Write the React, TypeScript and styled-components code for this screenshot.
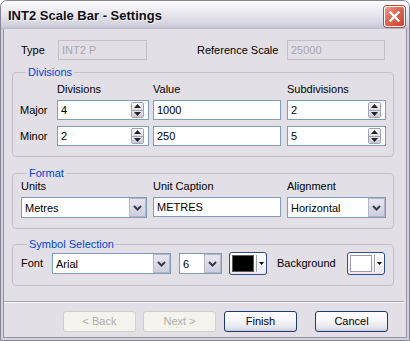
import React from 'react';
import styled, { createGlobalStyle } from 'styled-components';

const GlobalStyle = createGlobalStyle`
  html, body { margin: 0; padding: 0; background: #ffffff; }
  body { font-family: "Liberation Sans", Arial, sans-serif; font-size: 11px; color: #000; }
  * { box-sizing: border-box; }
`;

const Window = styled.div`
  width: 410px;
  height: 341px;
  display: flex;
  flex-direction: column;
  border: 1px solid #858494;
  border-radius: 7px 7px 0 0;
  overflow: hidden;
  background: #e3dfe6;
`;

const TitleBar = styled.div`
  height: 28px;
  flex: none;
  display: flex;
  align-items: center;
  justify-content: space-between;
  padding: 0 4px 0 7px;
  background: linear-gradient(#fdfdfe 0%, #f1f0f5 25%, #e2e1ea 60%, #cfcedb 90%, #b9b8c7 100%);
`;

const Title = styled.span`
  font-family: "Liberation Sans", Arial, sans-serif;
  font-weight: bold;
  font-size: 13px;
  color: #0f0f14;
  text-shadow: 1px 1px 0 rgba(255, 255, 255, 0.7);
  padding-top: 1px;
`;

const CloseBtn = styled.div`
  width: 21px;
  height: 21px;
  border-radius: 3px;
  border: 1px solid #ffffff;
  box-shadow: 0 0 0 1px #b54a3c;
  background: linear-gradient(135deg, #f0a092 0%, #de6a55 40%, #c9442f 100%);
  display: flex;
  align-items: center;
  justify-content: center;
  margin-top: 2px;
`;

const Frame = styled.div`
  flex: 1;
  display: flex;
  flex-direction: column;
  border-style: solid;
  border-width: 0 2px 2px 2px;
  border-color: #d2d1dc;
`;

const Body = styled.div`
  flex: 1;
  display: flex;
  flex-direction: column;
  border-style: solid;
  border-width: 0 1px 1px 1px;
  border-color: #94939f;
  padding: 11px 12px 0 8px;
  overflow: hidden;
`;

const TopRow = styled.div`
  display: grid;
  grid-template-columns: 37px 139px 90px 98px;
  align-items: center;
  margin-left: 9px;
  height: 20px;
`;

const Label = styled.span`
  white-space: nowrap;
  line-height: 13px;
`;

const FieldLabel = styled.span`
  white-space: nowrap;
  line-height: 13px;
  height: 20px;
  display: flex;
  align-items: center;
`;

const TextBox = styled.div<{ $w: number; $disabled?: boolean }>`
  width: ${p => p.$w}px;
  height: 20px;
  border: 1px solid ${p => (p.$disabled ? '#c2bfc6' : '#7f9db9')};
  background: ${p => (p.$disabled ? '#e3dfe6' : '#ffffff')};
  color: ${p => (p.$disabled ? '#a9a6ae' : '#000000')};
  display: flex;
  align-items: center;
  padding-left: 3px;
  white-space: nowrap;
`;

const BoxText = styled.span`
  flex: 1;
`;

const Spin = styled.div`
  width: 13px;
  height: 16px;
  margin-right: 4px;
  display: flex;
  flex-direction: column;
  border: 1px solid #a2a1b1;
  border-radius: 2px;
  overflow: hidden;
`;

const SpinHalf = styled.div<{ $down?: boolean }>`
  flex: 1;
  display: flex;
  align-items: center;
  justify-content: center;
  background: ${p => (p.$down ? 'linear-gradient(#e6e5ee, #c9c8d6)' : 'linear-gradient(#ffffff, #dddce6)')};
  border-top: ${p => (p.$down ? '1px solid #a2a1b1' : 'none')};
`;

const Select = styled.div<{ $w: number }>`
  width: ${p => p.$w}px;
  height: 21px;
  border: 1px solid #7f9db9;
  background: #ffffff;
  display: flex;
  align-items: stretch;
  padding-left: 3px;
`;

const SelectText = styled.span`
  flex: 1;
  display: flex;
  align-items: center;
  white-space: nowrap;
`;

const DropBtn = styled.div`
  width: 17px;
  flex: none;
  margin: 0;
  border: 1px solid #b7b6c8;
  background: linear-gradient(#e6e5ef, #cfcee0);
  display: flex;
  align-items: center;
  justify-content: center;
`;

const Group = styled.fieldset<{ $pad: string; $mt: number }>`
  margin: ${p => p.$mt}px 0 0 0;
  width: 382px;
  min-width: 0;
  padding: ${p => p.$pad};
  border: 1px solid #c3c0c8;
  border-radius: 4px;
`;

const Legend = styled.legend`
  color: #0046d5;
  padding: 0 2px;
  margin-left: 6px;
  line-height: 13px;
`;

const DivGrid = styled.div`
  display: grid;
  grid-template-columns: 37px 96px 134px 99px;
  grid-template-rows: 17px 26px 20px;
  align-items: start;
`;

const FormatGrid = styled.div`
  display: grid;
  grid-template-columns: 132px 134px 99px;
  grid-template-rows: 17px 21px;
  align-items: start;
`;

const SymbolRow = styled.div`
  display: flex;
  align-items: center;
  height: 23px;
`;

const FontLabel = styled.span`
  width: 31px;
  line-height: 13px;
`;

const Gap = styled.div<{ $w: number }>`
  width: ${p => p.$w}px;
  flex: none;
`;

const ColorBtn = styled.div`
  width: 38px;
  height: 23px;
  margin-left: 0;
  border: 1px solid #2f4f86;
  border-radius: 3px;
  background: linear-gradient(#ffffff, #ebeaf1);
  display: flex;
  align-items: center;
  padding-left: 2px;
`;

const Swatch = styled.div<{ $c: string; $edge: string }>`
  width: 22px;
  height: 17px;
  background: ${p => p.$c};
  border: 1px solid ${p => p.$edge};
`;

const SwatchDivider = styled.div`
  width: 1px;
  height: 17px;
  background: #9f9eae;
  margin-left: 2px;
  box-shadow: 1px 0 0 #ffffff;
`;

const SwatchArrow = styled.div`
  flex: 1;
  display: flex;
  align-items: center;
  justify-content: center;
`;

const BgLabel = styled.span`
  line-height: 13px;
  margin-left: 10px;
`;

const Push = styled.div`
  flex: 1;
`;

const Separator = styled.div`
  margin: 15px -10px 0 -8px;
  height: 2px;
  border-top: 1px solid #a3a2b0;
  border-bottom: 1px solid #ffffff;
`;

const ButtonRow = styled.div`
  display: flex;
  justify-content: flex-end;
  margin-top: 8px;
  padding-right: 6px;
`;

const Button = styled.div<{ $disabled?: boolean; $ml: number }>`
  width: 73px;
  height: 21px;
  margin-left: ${p => p.$ml}px;
  border-radius: 3px;
  border: 1px solid ${p => (p.$disabled ? '#d2cfc8' : '#1c3b6e')};
  background: ${p => (p.$disabled ? '#f4f3ee' : 'linear-gradient(#ffffff 0%, #f6f6f9 45%, #e4e3ec 85%, #c9c8d8 100%)')};
  color: ${p => (p.$disabled ? '#b1aea6' : '#000000')};
  display: flex;
  align-items: center;
  justify-content: center;
  line-height: 13px;
`;

const Chevron = () => (
  <svg width="9" height="6" viewBox="0 0 9 6">
    <path d="M1 1 L4.5 4.5 L8 1" fill="none" stroke="#3b3b48" strokeWidth="2" />
  </svg>
);

const TriUp = () => (
  <svg width="7" height="4" viewBox="0 0 7 4">
    <path d="M0 4 L3.5 0 L7 4 Z" fill="#222" />
  </svg>
);

const TriDown = () => (
  <svg width="7" height="4" viewBox="0 0 7 4">
    <path d="M0 0 L3.5 4 L7 0 Z" fill="#222" />
  </svg>
);

const SpinBox: React.FC<{ value: string; w: number }> = ({ value, w }) => (
  <TextBox $w={w}>
    <BoxText>{value}</BoxText>
    <Spin>
      <SpinHalf>
        <TriUp />
      </SpinHalf>
      <SpinHalf $down>
        <TriDown />
      </SpinHalf>
    </Spin>
  </TextBox>
);

const Combo: React.FC<{ value: string; w: number }> = ({ value, w }) => (
  <Select $w={w}>
    <SelectText>{value}</SelectText>
    <DropBtn>
      <Chevron />
    </DropBtn>
  </Select>
);

const ColorPicker: React.FC<{ color: string; edge: string }> = ({ color, edge }) => (
  <ColorBtn>
    <Swatch $c={color} $edge={edge} />
    <SwatchDivider />
    <SwatchArrow>
      <svg width="5" height="3" viewBox="0 0 5 3">
        <path d="M0 0 L2.5 3 L5 0 Z" fill="#000" />
      </svg>
    </SwatchArrow>
  </ColorBtn>
);

export default function App() {
  return (
    <>
      <GlobalStyle />
      <Window>
        <TitleBar>
          <Title>INT2 Scale Bar - Settings</Title>
          <CloseBtn>
            <svg width="11" height="11" viewBox="0 0 11 11">
              <path d="M1.5 1.5 L9.5 9.5 M9.5 1.5 L1.5 9.5" stroke="#ffffff" strokeWidth="2.4" strokeLinecap="square" />
            </svg>
          </CloseBtn>
        </TitleBar>
        <Frame>
          <Body>
            <TopRow>
              <Label>Type</Label>
              <TextBox $w={89} $disabled>INT2 P</TextBox>
              <Label>Reference Scale</Label>
              <TextBox $w={98} $disabled>25000</TextBox>
            </TopRow>

            <Group $pad="4px 7px 10px 7px" $mt={6}>
              <Legend>Divisions</Legend>
              <DivGrid>
                <span />
                <Label>Divisions</Label>
                <Label>Value</Label>
                <Label>Subdivisions</Label>

                <FieldLabel>Major</FieldLabel>
                <SpinBox value="4" w={92} />
                <TextBox $w={128}>1000</TextBox>
                <SpinBox value="2" w={99} />

                <FieldLabel>Minor</FieldLabel>
                <SpinBox value="2" w={92} />
                <TextBox $w={128}>250</TextBox>
                <SpinBox value="5" w={99} />
              </DivGrid>
            </Group>

            <Group $pad="0 7px 10px 8px" $mt={10}>
              <Legend>Format</Legend>
              <FormatGrid>
                <Label>Units</Label>
                <Label>Unit Caption</Label>
                <Label>Alignment</Label>
                <Combo value="Metres" w={126} />
                <TextBox $w={128}>METRES</TextBox>
                <Combo value="Horizontal" w={99} />
              </FormatGrid>
            </Group>

            <Group $pad="1px 8px 10px 8px" $mt={9}>
              <Legend>Symbol Selection</Legend>
              <SymbolRow>
                <FontLabel>Font</FontLabel>
                <Combo value="Arial" w={119} />
                <Gap $w={8} />
                <Combo value="6" w={43} />
                <Gap $w={7} />
                <ColorPicker color="#000000" edge="#5a5a5a" />
                <BgLabel>Background</BgLabel>
                <Push />
                <ColorPicker color="#ffffff" edge="#9a9aaa" />
              </SymbolRow>
            </Group>

            <Separator />

            <ButtonRow>
              <Button $disabled $ml={0}>&lt; Back</Button>
              <Button $disabled $ml={7}>Next &gt;</Button>
              <Button $ml={8}>Finish</Button>
              <Button $ml={18}>Cancel</Button>
            </ButtonRow>
          </Body>
        </Frame>
      </Window>
    </>
  );
}
